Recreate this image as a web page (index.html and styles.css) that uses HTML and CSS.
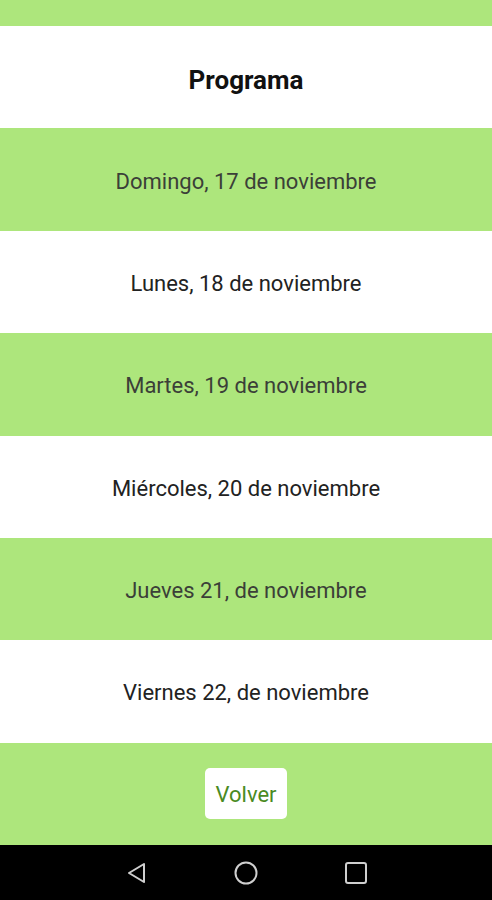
FILE: index.html
```html
<!DOCTYPE html>
<html lang="es">
<head>
  <meta charset="UTF-8">
  <meta name="viewport" content="width=device-width, initial-scale=1.0">
  <title>Programa</title>
  <link rel="stylesheet" href="styles.css">
</head>
<body>
  <div class="status"></div>

  <main class="list">
    <header class="row title"><span>Programa</span></header>
    <div class="row green"><span>Domingo, 17 de noviembre</span></div>
    <div class="row white"><span>Lunes, 18 de noviembre</span></div>
    <div class="row green"><span>Martes, 19 de noviembre</span></div>
    <div class="row white"><span>Miércoles, 20 de noviembre</span></div>
    <div class="row green"><span>Jueves 21, de noviembre</span></div>
    <div class="row white"><span>Viernes 22, de noviembre</span></div>
    <footer class="row green">
      <button class="back">Volver</button>
    </footer>
  </main>

  <nav class="navbar">
    <svg width="24" height="24" viewBox="0 0 24 24">
      <path d="M20 3 L5 12 L20 21 Z" fill="none" stroke="#cfcfcf" stroke-width="2" stroke-linejoin="round"/>
    </svg>
    <svg width="24" height="24" viewBox="0 0 24 24">
      <circle cx="12" cy="12" r="10.5" fill="none" stroke="#cfcfcf" stroke-width="2"/>
    </svg>
    <svg width="24" height="24" viewBox="0 0 24 24">
      <rect x="2" y="2" width="20" height="20" rx="2" fill="none" stroke="#cfcfcf" stroke-width="2"/>
    </svg>
  </nav>
</body>
</html>
```

FILE: styles.css
```css
body {
  margin: 0;
  height: 900px;
  display: flex;
  flex-direction: column;
  font-family: Roboto, "Noto Sans", sans-serif;
}
.status {
  height: 26px;
  background-color: #ade67c;
}
.list {
  flex: 1;
  display: flex;
  flex-direction: column;
}
.row {
  flex: 1;
  display: flex;
  align-items: center;
  justify-content: center;
  font-size: 22px;
}
.row span {
  padding-top: 3px;
}
.title {
  background-color: #fff;
  color: #111;
  font-weight: bold;
  font-size: 26px;
}
.title span {
  padding-top: 6px;
}
.green {
  background-color: #ade67c;
  color: #3b3f38;
}
.white {
  background-color: #fff;
  color: #222;
}
.back {
  font-family: Roboto, "Noto Sans", sans-serif;
  font-size: 22px;
  color: #4a8b1f;
  background-color: #fff;
  border: none;
  border-radius: 5px;
  width: 82px;
  height: 51px;
  padding: 2px 0 0;
}
.navbar {
  height: 55px;
  background-color: #000;
  display: flex;
  align-items: center;
  justify-content: center;
  gap: 86px;
}
```
